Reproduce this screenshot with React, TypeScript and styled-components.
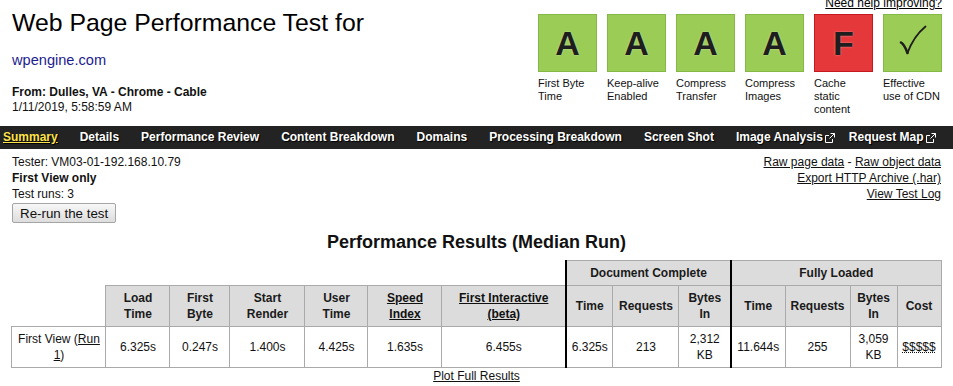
import styled, { createGlobalStyle } from "styled-components";

const GlobalStyle = createGlobalStyle`
  html, body {
    margin: 0;
    padding: 0;
    background: #fff;
  }
  body {
    font-family: "Liberation Sans", Arial, sans-serif;
    font-size: 12px;
    color: #111;
    overflow: hidden;
  }
`;

interface IGrade {
  grade: string;
  label: string;
  bad?: boolean;
}

const grades: IGrade[] = [
  { grade: "A", label: "First Byte Time" },
  { grade: "A", label: "Keep-alive Enabled" },
  { grade: "A", label: "Compress Transfer" },
  { grade: "A", label: "Compress Images" },
  { grade: "F", label: "Cache static content", bad: true },
  { grade: "check", label: "Effective use of CDN" },
];

const navItems = [
  { label: "Summary", active: true },
  { label: "Details" },
  { label: "Performance Review" },
  { label: "Content Breakdown" },
  { label: "Domains" },
  { label: "Processing Breakdown" },
  { label: "Screen Shot" },
  { label: "Image Analysis", external: true },
  { label: "Request Map", external: true },
];

const ExternalIcon = () => (
  <svg width="10" height="10" viewBox="0 0 10 10" fill="none" stroke="#fff" strokeWidth="1">
    <path d="M4 2.5H0.5V9.5H7.5V6" />
    <path d="M5.5 0.5H9.5V4.5" />
    <path d="M9.5 0.5L4.5 5.5" />
  </svg>
);

const CheckMark = () => (
  <svg width="28" height="30" viewBox="0 0 28 30" fill="none" stroke="#1e1e1e" strokeLinecap="round">
    <path d="M2 17.5C4.5 19 6.5 22.5 8.5 28" strokeWidth="2.6" />
    <path d="M8.5 28C12.5 17 18 8.5 26.5 1.5" strokeWidth="1.8" />
  </svg>
);

const App = () => {
  return (
    <>
      <GlobalStyle />
      <Header>
        <div>
          <Title>Web Page Performance Test for</Title>
          <SiteLink href="#">wpengine.com</SiteLink>
          <From>From: Dulles, VA - Chrome - Cable</From>
          <DateLine>1/11/2019, 5:58:59 AM</DateLine>
        </div>
        <Grades>
          <HelpLink href="#">Need help improving?</HelpLink>
          <GradeRow>
            {grades.map((g) => (
              <GradeItem key={g.label}>
                <GradeBox $bad={g.bad}>
                  {g.grade === "check" ? <CheckMark /> : g.grade}
                </GradeBox>
                <GradeLabel>{g.label}</GradeLabel>
              </GradeItem>
            ))}
          </GradeRow>
        </Grades>
      </Header>

      <Nav>
        {navItems.map((item) => (
          <NavItem key={item.label} href="#" $active={item.active} $external={item.external}>
            {item.label}
            {item.external && <ExternalIcon />}
          </NavItem>
        ))}
      </Nav>

      <InfoRow>
        <div>
          <div>Tester: VM03-01-192.168.10.79</div>
          <b>First View only</b>
          <div>Test runs: 3</div>
          <Button type="button">Re-run the test</Button>
        </div>
        <RightLinks>
          <div>
            <TextLink href="#">Raw page data</TextLink> -{" "}
            <TextLink href="#">Raw object data</TextLink>
          </div>
          <div>
            <TextLink href="#">Export HTTP Archive (.har)</TextLink>
          </div>
          <div>
            <TextLink href="#">View Test Log</TextLink>
          </div>
        </RightLinks>
      </InfoRow>

      <Heading>Performance Results (Median Run)</Heading>

      <Table>
        <colgroup>
          {[94, 64, 60, 75, 63, 74, 124, 47, 66, 52, 54, 65, 47, 44].map((w, i) => (
            <col key={i} style={{ width: w }} />
          ))}
        </colgroup>
        <tbody>
          <tr>
            <Empty colSpan={7} />
            <Th colSpan={3} $thick>
              Document Complete
            </Th>
            <Th colSpan={4} $thick>
              Fully Loaded
            </Th>
          </tr>
          <tr>
            <Empty />
            <Th>Load Time</Th>
            <Th>First Byte</Th>
            <Th>Start Render</Th>
            <Th>User Time</Th>
            <Th>
              <TextLink href="#">Speed Index</TextLink>
            </Th>
            <Th>
              <TextLink href="#">First Interactive (beta)</TextLink>
            </Th>
            <Th $thick>Time</Th>
            <Th>Requests</Th>
            <Th>Bytes In</Th>
            <Th $thick>Time</Th>
            <Th>Requests</Th>
            <Th>Bytes In</Th>
            <Th>Cost</Th>
          </tr>
          <tr>
            <Td>
              First View (<TextLink href="#">Run 1</TextLink>)
            </Td>
            <Td>6.325s</Td>
            <Td>0.247s</Td>
            <Td>1.400s</Td>
            <Td>4.425s</Td>
            <Td>1.635s</Td>
            <Td>6.455s</Td>
            <Td $thick>6.325s</Td>
            <Td>213</Td>
            <Td>2,312 KB</Td>
            <Td $thick>11.644s</Td>
            <Td>255</Td>
            <Td>3,059 KB</Td>
            <Td>
              <Cost>$$$$$</Cost>
            </Td>
          </tr>
        </tbody>
      </Table>

      <PlotLine>
        <TextLink href="#">Plot Full Results</TextLink>
      </PlotLine>
    </>
  );
};
export default App;

const Header = styled.header`
  display: flex;
  justify-content: space-between;
  align-items: flex-start;
  height: 126px;
  padding: 0 11px 0 12px;
  box-sizing: border-box;
`;

const Title = styled.h1`
  margin: 9px 0 0;
  font-size: 24.8px;
  font-weight: normal;
  line-height: 28px;
  color: #000;
`;

const SiteLink = styled.a`
  display: block;
  margin-top: 14px;
  font-size: 14.6px;
  line-height: 18px;
  color: #1c1c8e;
  text-decoration: none;
`;

const From = styled.div`
  margin-top: 16px;
  line-height: 14px;
  font-weight: bold;
`;

const DateLine = styled.div`
  margin-top: 1px;
  line-height: 14px;
`;

const Grades = styled.div`
  display: flex;
  flex-direction: column;
  align-items: flex-end;
`;

const HelpLink = styled.a`
  margin-top: -4px;
  line-height: 14px;
  color: #000;
  text-decoration: underline;
`;

const GradeRow = styled.div`
  display: flex;
  gap: 10px;
  margin-top: 4px;
`;

const GradeItem = styled.div`
  width: 59px;
`;

const GradeBox = styled.div<{ $bad?: boolean }>`
  box-sizing: border-box;
  height: 58px;
  display: flex;
  align-items: center;
  justify-content: center;
  background: ${(p) => (p.$bad ? "#e4383b" : "#9bcc55")};
  border: 1px solid ${(p) => (p.$bad ? "#c41a1f" : "#85b947")};
  color: #1e1e1e;
  font-size: 34px;
  font-weight: bold;
  text-shadow: 0 0 2px rgba(255, 255, 255, 0.5);

  svg {
    margin-bottom: 7px;
  }
`;

const GradeLabel = styled.div`
  margin-top: 5px;
  font-size: 11px;
  line-height: 13px;
  color: #111;
`;

const Nav = styled.nav`
  display: flex;
  align-items: center;
  gap: 22px;
  height: 23px;
  padding-left: 3px;
  background: #232323;
`;

const NavItem = styled.a<{ $active?: boolean; $external?: boolean }>`
  display: flex;
  align-items: center;
  gap: 2px;
  margin-right: ${(p) => (p.$external ? "-8px" : "0")};
  line-height: 23px;
  font-weight: bold;
  color: ${(p) => (p.$active ? "#ffe34a" : "#fff")};
  text-decoration: ${(p) => (p.$active ? "underline" : "none")};
  text-shadow: 1px 1px 1px #000;
  white-space: nowrap;
`;

const InfoRow = styled.div`
  display: flex;
  justify-content: space-between;
  align-items: flex-start;
  padding: 5px 12px 0;
  line-height: 16px;
`;

const RightLinks = styled.div`
  text-align: right;
`;

const TextLink = styled.a`
  color: #111;
  text-decoration: underline;
`;

const Button = styled.button`
  display: block;
  margin-top: 1px;
  height: 20px;
  padding: 0 7px;
  font-family: "Liberation Sans", Arial, sans-serif;
  font-size: 13.33px;
  color: #111;
  background: linear-gradient(#f7f7f7, #dddddd);
  border: 1px solid #a5a5a5;
  border-radius: 2px;
`;

const Heading = styled.h2`
  margin: 8px 0 0;
  font-size: 18px;
  line-height: 22px;
  font-weight: bold;
  text-align: center;
  color: #111;
`;

const Table = styled.table`
  margin: 7px auto 0;
  width: 929px;
  table-layout: fixed;
  border-collapse: collapse;
`;

const Empty = styled.td`
  padding: 0;
  border: none;
`;

const Th = styled.th<{ $thick?: boolean }>`
  padding: 4px;
  line-height: 16px;
  font-size: 12px;
  font-weight: bold;
  color: #1a1a1a;
  background: #dcdcdc;
  border: 1px solid #aaa;
  border-left: ${(p) => (p.$thick ? "2px solid #000" : "1px solid #aaa")};
  vertical-align: middle;
  text-align: center;
`;

const Td = styled.td<{ $thick?: boolean }>`
  padding: 4px;
  line-height: 16px;
  font-size: 12px;
  color: #111;
  border: 1px solid #aaa;
  border-left: ${(p) => (p.$thick ? "2px solid #000" : "1px solid #aaa")};
  vertical-align: middle;
  text-align: center;
`;

const Cost = styled.span`
  text-decoration: underline dotted;
`;

const PlotLine = styled.div`
  line-height: 16px;
  text-align: center;
`;
